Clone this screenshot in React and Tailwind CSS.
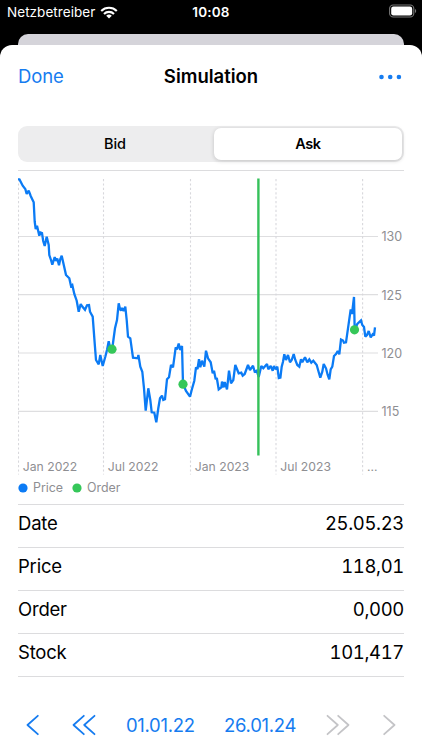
const PRICE_POINTS = [
  [18, 179], [19.5, 179.5], [22.7, 185.7], [25.3, 189], [26.7, 194], [28.7, 190.7], [30.7, 196], [33.7, 202.3],
  [34.7, 221.7], [35.7, 229], [37, 225.7], [39.3, 235.7], [40.5, 232.5], [42, 233], [43.2, 241], [44.7, 246],
  [46.7, 236.7], [48.7, 245], [49.3, 255], [51, 260], [52.3, 264.7], [54.7, 257], [56, 261], [57.3, 258.5],
  [59, 265.3], [60.3, 259], [61.7, 255.7], [64, 266], [66, 275], [69.3, 278.3], [71, 286], [72.3, 285],
  [74.3, 294], [76.7, 300.7], [78.7, 311.7], [80.7, 304], [82.3, 306.5], [85, 309.8], [87, 305.3], [89, 305],
  [90, 311.7], [92.7, 316.7], [94.7, 343.3], [96, 360], [98.7, 364.3], [100.3, 355], [102.7, 366],
  [105.3, 356.7], [107, 350], [108.7, 341.3], [110.2, 348], [112.3, 349], [113, 343], [115, 328.3], [117, 320],
  [118.7, 303.3], [120, 309], [121, 310.7], [122, 308], [123.6, 311], [125.3, 306.7], [126.7, 320], [128, 336.7],
  [130.3, 338.3], [133, 357.7], [137.7, 358.3], [138.4, 355], [140.3, 366.7], [142.3, 371.7], [144, 388.3],
  [145.7, 410.7], [148.3, 388.3], [150.3, 400], [151.7, 412.3], [154.3, 412.7], [156.3, 422.3], [158.3, 408.3],
  [160, 398.3], [162, 395.7], [163.3, 400], [165, 399.3], [167, 379.3], [169, 377.3], [171, 365], [173, 367.3],
  [175.7, 347.3], [177, 349.3], [178.7, 343.6], [180.3, 350], [182, 346], [183, 384], [186, 391], [190, 396.7],
  [191.7, 390], [194.3, 380.7], [196, 367.3], [197.5, 369], [199, 359.3], [200.3, 367.3], [202, 360.7],
  [204.3, 366.7], [206, 350.7], [208, 358.3], [210.7, 362.3], [212.7, 373.3], [214, 370.7], [215.7, 379.3],
  [216.8, 378], [218.7, 389.3], [221.3, 387.3], [222, 381.7], [223.7, 387.3], [224.7, 382], [227, 389.3],
  [229, 370.7], [231, 383.3], [233.3, 380], [235.3, 365], [238.7, 373.3], [241.3, 372.7], [242.7, 375.7],
  [244.7, 374], [248, 365], [250, 370], [253, 365.7], [254.7, 371.7], [256.7, 370.7], [258.7, 377], [261.3, 366],
  [263.3, 368.3], [267, 364], [268.3, 369.3], [270.7, 366], [272.7, 370.7], [274, 366], [275.7, 369.3],
  [277.3, 366.7], [278.8, 378], [280.4, 377.5], [281.7, 366.7], [283, 361.7], [284.3, 354.3], [286, 360],
  [288, 355], [290, 362.3], [291.7, 360], [293.7, 354], [295.3, 360], [297.3, 365], [299.3, 366.7], [301, 359.3],
  [302.3, 362.3], [305, 357.3], [307.3, 362.3], [309.3, 359.3], [311.3, 362.7], [313.3, 360.7], [316.7, 365],
  [318.3, 370.7], [320.3, 377.7], [322.3, 371.7], [323.7, 364], [326, 368.3], [327.7, 375], [329.3, 379.3],
  [330.7, 369.3], [332.3, 366.7], [334, 356], [336, 354], [337.7, 351], [339.3, 354.3], [341, 339.5],
  [343, 340.5], [344, 342.7], [346, 342.3], [348, 328.3], [350.7, 309.3], [352, 314], [354, 297], [354.7, 330],
  [357.3, 324], [361, 320.5], [362.3, 325], [364, 327], [365.3, 336.7], [367, 335], [368.7, 331], [370.7, 337.3],
  [372.7, 334.3], [374, 335.5], [375, 327.3],
];

const ORDERS = [[112, 349.2], [183, 384.2], [354.5, 329.8]];

const Y_TICKS = [
  { y: 236.5, label: '130' },
  { y: 294.7, label: '125' },
  { y: 353, label: '120' },
  { y: 411.3, label: '115' },
];

const X_TICKS = [
  { x: 18.5, label: 'Jan 2022' },
  { x: 103.5, label: 'Jul 2022' },
  { x: 190.5, label: 'Jan 2023' },
  { x: 276, label: 'Jul 2023' },
  { x: 362.6, label: '...' },
];

const ROWS = [
  { label: 'Date', value: '25.05.23' },
  { label: 'Price', value: '118,01' },
  { label: 'Order', value: '0,000' },
  { label: 'Stock', value: '101,417' },
];

function StatusBar() {
  return (
    <div className="grid h-[34px] grid-cols-3 items-start pt-1 text-[13.5px] leading-4 text-white">
      <div className="flex items-center gap-[5px] pl-[7px]">
        <span className="tracking-[0.05px]">Netzbetreiber</span>
        <svg width="18" height="13" viewBox="0 0 18 13" fill="none" stroke="white" strokeWidth="2.1">
          <path d="M1.2 4.9a11.2 11.2 0 0 1 15.6 0" />
          <path d="M4 7.9a7.1 7.1 0 0 1 10 0" />
          <path d="M9 12.6 6.2 9.8a4 4 0 0 1 5.6 0z" fill="white" stroke="none" />
        </svg>
      </div>
      <span className="text-center font-semibold tracking-[0.2px]">10:08</span>
      <svg className="mr-[5px] justify-self-end" width="28" height="14" viewBox="0 0 28 14">
        <rect x="0.6" y="1" width="24.2" height="12" rx="3.6" fill="none" stroke="#777" strokeWidth="1.1" />
        <rect x="2.2" y="2.6" width="21" height="8.8" rx="2.2" fill="white" />
        <path d="M26 5v4c1.6-.7 1.6-3.3 0-4z" fill="#777" />
      </svg>
    </div>
  );
}

function PriceChart() {
  return (
    <svg className="block w-full" height="305" viewBox="18 171 386 305" fontFamily="Inter, sans-serif">
      {Y_TICKS.map((tick) => (
        <g key={tick.label}>
          <line x1="18" x2="378" y1={tick.y} y2={tick.y} stroke="#dedee0" strokeWidth="1.2" />
          <text x="381.5" y={tick.y + 4.8} fontSize="12.5" fill="#8e8e92">{tick.label}</text>
        </g>
      ))}
      {X_TICKS.map((tick) => (
        <g key={tick.label}>
          <line x1={tick.x} x2={tick.x} y1="179" y2="474.5" stroke="#d8d8dc" strokeWidth="1.1" strokeDasharray="2.2 2.2" />
          <text x={tick.x + 4.3} y="471.4" fontSize="12.2" fill="#8e8e92">{tick.label}</text>
        </g>
      ))}
      <polyline
        points={PRICE_POINTS.map((p) => p.join(',')).join(' ')}
        fill="none"
        stroke="#0b7bf5"
        strokeWidth="2.3"
        strokeLinejoin="miter"
        strokeMiterlimit="2"
      />
      {ORDERS.map(([x, y]) => (
        <circle key={x} cx={x} cy={y} r="4.6" fill="#35c759" />
      ))}
      <line x1="258.4" x2="258.4" y1="178.5" y2="455.5" stroke="#35c15a" strokeWidth="2.4" />
    </svg>
  );
}

function LegendItem({ color, label }) {
  return (
    <div className="flex items-center gap-[5px]">
      <svg width="10" height="10" viewBox="0 0 10 10">
        <circle cx="5" cy="5" r="4.6" fill={color} />
      </svg>
      {label}
    </div>
  );
}

function Chevrons({ double, flip }) {
  return (
    <svg
      className={flip ? '-scale-x-100' : ''}
      width={double ? 24 : 13}
      height="22"
      viewBox={double ? '0 0 24 22' : '0 0 13 22'}
      fill="none"
      stroke="currentColor"
      strokeWidth="1.8"
      strokeLinecap="round"
      strokeLinejoin="round"
    >
      <path d="M11.8 1.8 1.5 11l10.3 9.2" />
      {double && <path d="M22.5 1.8 12.2 11l10.3 9.2" />}
    </svg>
  );
}

export default function App() {
  return (
    <div className="h-[750px] w-[422px] overflow-hidden bg-black font-['Inter',sans-serif] text-black">
      <StatusBar />
      <div className="mx-[18px] h-[11px] rounded-t-[10px] bg-[#d5d4da]" />
      <div className="flex h-[705px] flex-col rounded-t-[12px] bg-white px-[18px]">
        <header className="grid h-16 grid-cols-3 items-center text-[18.5px]">
          <button className="text-left tracking-[-0.1px] text-[#167cf0]">Done</button>
          <h1 className="text-center text-[18.5px] font-semibold">Simulation</h1>
          <button className="justify-self-end pr-0.5 text-[#167cf0]">
            <svg width="23" height="6" viewBox="0 0 23 6" fill="currentColor">
              <circle cx="2.5" cy="3" r="2.3" />
              <circle cx="11.2" cy="3" r="2.3" />
              <circle cx="19.9" cy="3" r="2.3" />
            </svg>
          </button>
        </header>

        <div className="mt-[17px] grid h-9 shrink-0 grid-cols-[1fr_188px] gap-1 rounded-[9px] bg-[#ededee] p-0.5 text-[14.5px]">
          <button className="font-medium">Bid</button>
          <button className="rounded-[7px] bg-white font-semibold tracking-[-0.4px] shadow-[0_1px_4px_rgba(0,0,0,0.18)]">
            Ask
          </button>
        </div>

        <div className="mt-2 border-t border-[#dcdcde]">
          <PriceChart />
        </div>

        <div className="flex h-7 items-start gap-[9px] pt-[3px] text-[12.4px] leading-[17px] text-[#8e8e92]">
          <LegendItem color="#0b7bf5" label="Price" />
          <LegendItem color="#35c759" label="Order" />
        </div>

        <dl className="border-b border-[#dcdcde] text-[18.5px]">
          {ROWS.map((row) => (
            <div key={row.label} className="flex h-[43.1px] items-center justify-between border-t border-[#dcdcde] pb-[5px]">
              <dt className="tracking-[-0.2px]">{row.label}</dt>
              <dd className="tracking-[-0.35px] tabular-nums">{row.value}</dd>
            </div>
          ))}
        </dl>

        <nav className="mt-9 flex h-6 items-center justify-between px-2 text-[18.5px] tracking-[-0.3px] text-[#167cf0]">
          <button className="mr-1"><Chevrons /></button>
          <button><Chevrons double /></button>
          <button>01.01.22</button>
          <button>26.01.24</button>
          <button className="text-[#c4c4c7]"><Chevrons double flip /></button>
          <button className="ml-1 text-[#c4c4c7]"><Chevrons flip /></button>
        </nav>
      </div>
    </div>
  );
}
